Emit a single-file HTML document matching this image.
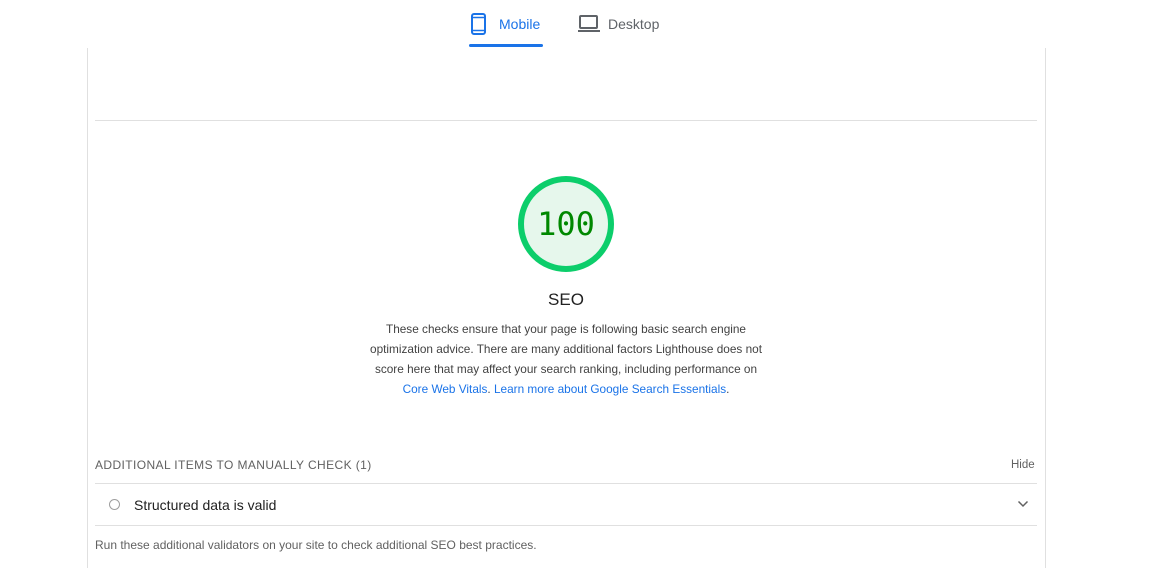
<!DOCTYPE html>
<html><head><meta charset="utf-8"><style>
body{margin:0;width:1162px;height:548px;overflow:hidden;background:#fff;font-family:"Liberation Sans",sans-serif;position:relative}
.abs{position:absolute}
.tab{font-size:14px;top:16px}
.box{left:87px;top:48px;width:957px;height:520px;border-left:1px solid #e0e0e0;border-right:1px solid #e0e0e0}
.hr{height:1px;background:#e0e0e0}
.desc{left:362px;width:408px;top:319px;font-size:11.8px;line-height:20px;color:#424242;text-align:center}
a{color:#1a73e8;text-decoration:none}
</style></head><body>
<svg class="abs" style="left:470px;top:12px" width="18" height="24" viewBox="0 0 18 24"><rect x="2" y="2" width="13" height="20" rx="2" fill="none" stroke="#1a73e8" stroke-width="2"/><line x1="3" y1="5.5" x2="14" y2="5.5" stroke="#1a73e8" stroke-width="1.5"/><line x1="3" y1="18.5" x2="14" y2="18.5" stroke="#1a73e8" stroke-width="1.5"/></svg>
<div class="abs tab" style="left:499px;color:#1a73e8">Mobile</div>
<div class="abs" style="left:469px;top:44px;width:74px;height:3px;background:#1a73e8;border-radius:2px"></div>
<svg class="abs" style="left:577px;top:14px" width="24" height="20" viewBox="0 0 24 20"><rect x="3" y="2" width="17" height="12" rx="1" fill="none" stroke="#5f6368" stroke-width="2"/><rect x="1" y="16" width="22" height="2" fill="#5f6368"/></svg>
<div class="abs tab" style="left:608px;color:#5f6368">Desktop</div>
<div class="abs box"></div>
<div class="abs hr" style="left:95px;top:120px;width:942px"></div>
<svg class="abs" style="left:516px;top:174px" width="100" height="100"><circle cx="50" cy="50" r="45" fill="#e6f7ec" stroke="#0cce6b" stroke-width="6"/><text x="50" y="61" text-anchor="middle" font-family="DejaVu Sans Mono,monospace" font-size="32" fill="#008800">100</text></svg>
<div class="abs" style="left:466px;width:200px;text-align:center;top:290px;font-size:17px;color:#212121">SEO</div>
<div class="abs desc">These checks ensure that your page is following basic search engine optimization advice. There are many additional factors Lighthouse does not score here that may affect your search ranking, including performance on <a>Core Web Vitals</a>. <a>Learn more about Google Search Essentials</a>.</div>
<div class="abs" style="left:95px;top:458px;font-size:12px;letter-spacing:0.4px;color:#616161">ADDITIONAL ITEMS TO MANUALLY CHECK (1)</div>
<div class="abs" style="left:1011px;top:459px;font-size:11.5px;color:#616161">Hide</div>
<div class="abs hr" style="left:95px;top:483px;width:942px"></div>
<div class="abs" style="left:109px;top:499px;width:9px;height:9px;border:1.5px solid #9e9e9e;border-radius:50%"></div>
<div class="abs" style="left:134px;top:497px;font-size:14px;color:#212121">Structured data is valid</div>
<svg class="abs" style="left:1017px;top:500px" width="12" height="8"><path d="M1.5 1.5L6 6L10.5 1.5" fill="none" stroke="#616161" stroke-width="1.5"/></svg>
<div class="abs hr" style="left:95px;top:525px;width:942px"></div>
<div class="abs" style="left:95px;top:538px;font-size:12px;color:#616161">Run these additional validators on your site to check additional SEO best practices.</div>
</body></html>
